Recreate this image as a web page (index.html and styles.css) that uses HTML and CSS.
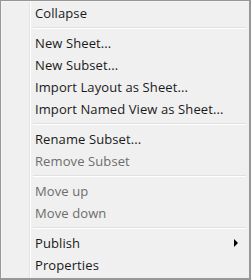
FILE: index.html
```html
<!DOCTYPE html>
<html>
<head>
<meta charset="utf-8">
<link rel="stylesheet" href="styles.css">
</head>
<body>
<div class="menu">
  <div class="item">Collapse</div>
  <div class="sep"></div>
  <div class="item">New Sheet...</div>
  <div class="item">New Subset...</div>
  <div class="item">Import Layout as Sheet...</div>
  <div class="item">Import Named View as Sheet...</div>
  <div class="sep"></div>
  <div class="item">Rename Subset...</div>
  <div class="item disabled">Remove Subset</div>
  <div class="sep"></div>
  <div class="item disabled">Move up</div>
  <div class="item disabled">Move down</div>
  <div class="sep"></div>
  <div class="item sub">Publish<span class="arrow"></span></div>
  <div class="item">Properties</div>
</div>
</body>
</html>
```
FILE: styles.css
```css
html, body {
  margin: 0;
  padding: 0;
  background: #ffffff;
}
.menu {
  width: 251px;
  height: 280px;
  box-sizing: border-box;
  border: 1px solid #979797;
  border-right-width: 2px;
  border-bottom-width: 2px;
  background: #f0f0f0;
  box-shadow: inset 1px 1px 0 #f5f5f5;
  padding: 1px 3px 3px 2px;
  font-family: "Open Sans", "Noto Sans", sans-serif;
  font-size: 13px;
  letter-spacing: 0.1px;
  color: #1a1a1a;
  position: relative;
  background-image: linear-gradient(to right, transparent 28px, #e2e3e3 28px, #e2e3e3 29px, #ffffff 29px, #ffffff 30px, transparent 30px);
}
.item {
  height: 22px;
  line-height: 22px;
  padding-left: 32px;
  display: flex;
  align-items: center;
  justify-content: space-between;
}
.item.disabled {
  color: #6d6d6d;
}
.sep {
  height: 8px;
  margin-left: 30px;
  display: flex;
  flex-direction: column;
  justify-content: center;
}
.sep::before {
  content: "";
  display: block;
  height: 1px;
  background: #e0e0e0;
  border-bottom: 1px solid #ffffff;
}
.arrow {
  width: 0;
  height: 0;
  border-top: 4px solid transparent;
  border-bottom: 4px solid transparent;
  border-left: 4px solid #000;
  margin-right: 8px;
}
```
